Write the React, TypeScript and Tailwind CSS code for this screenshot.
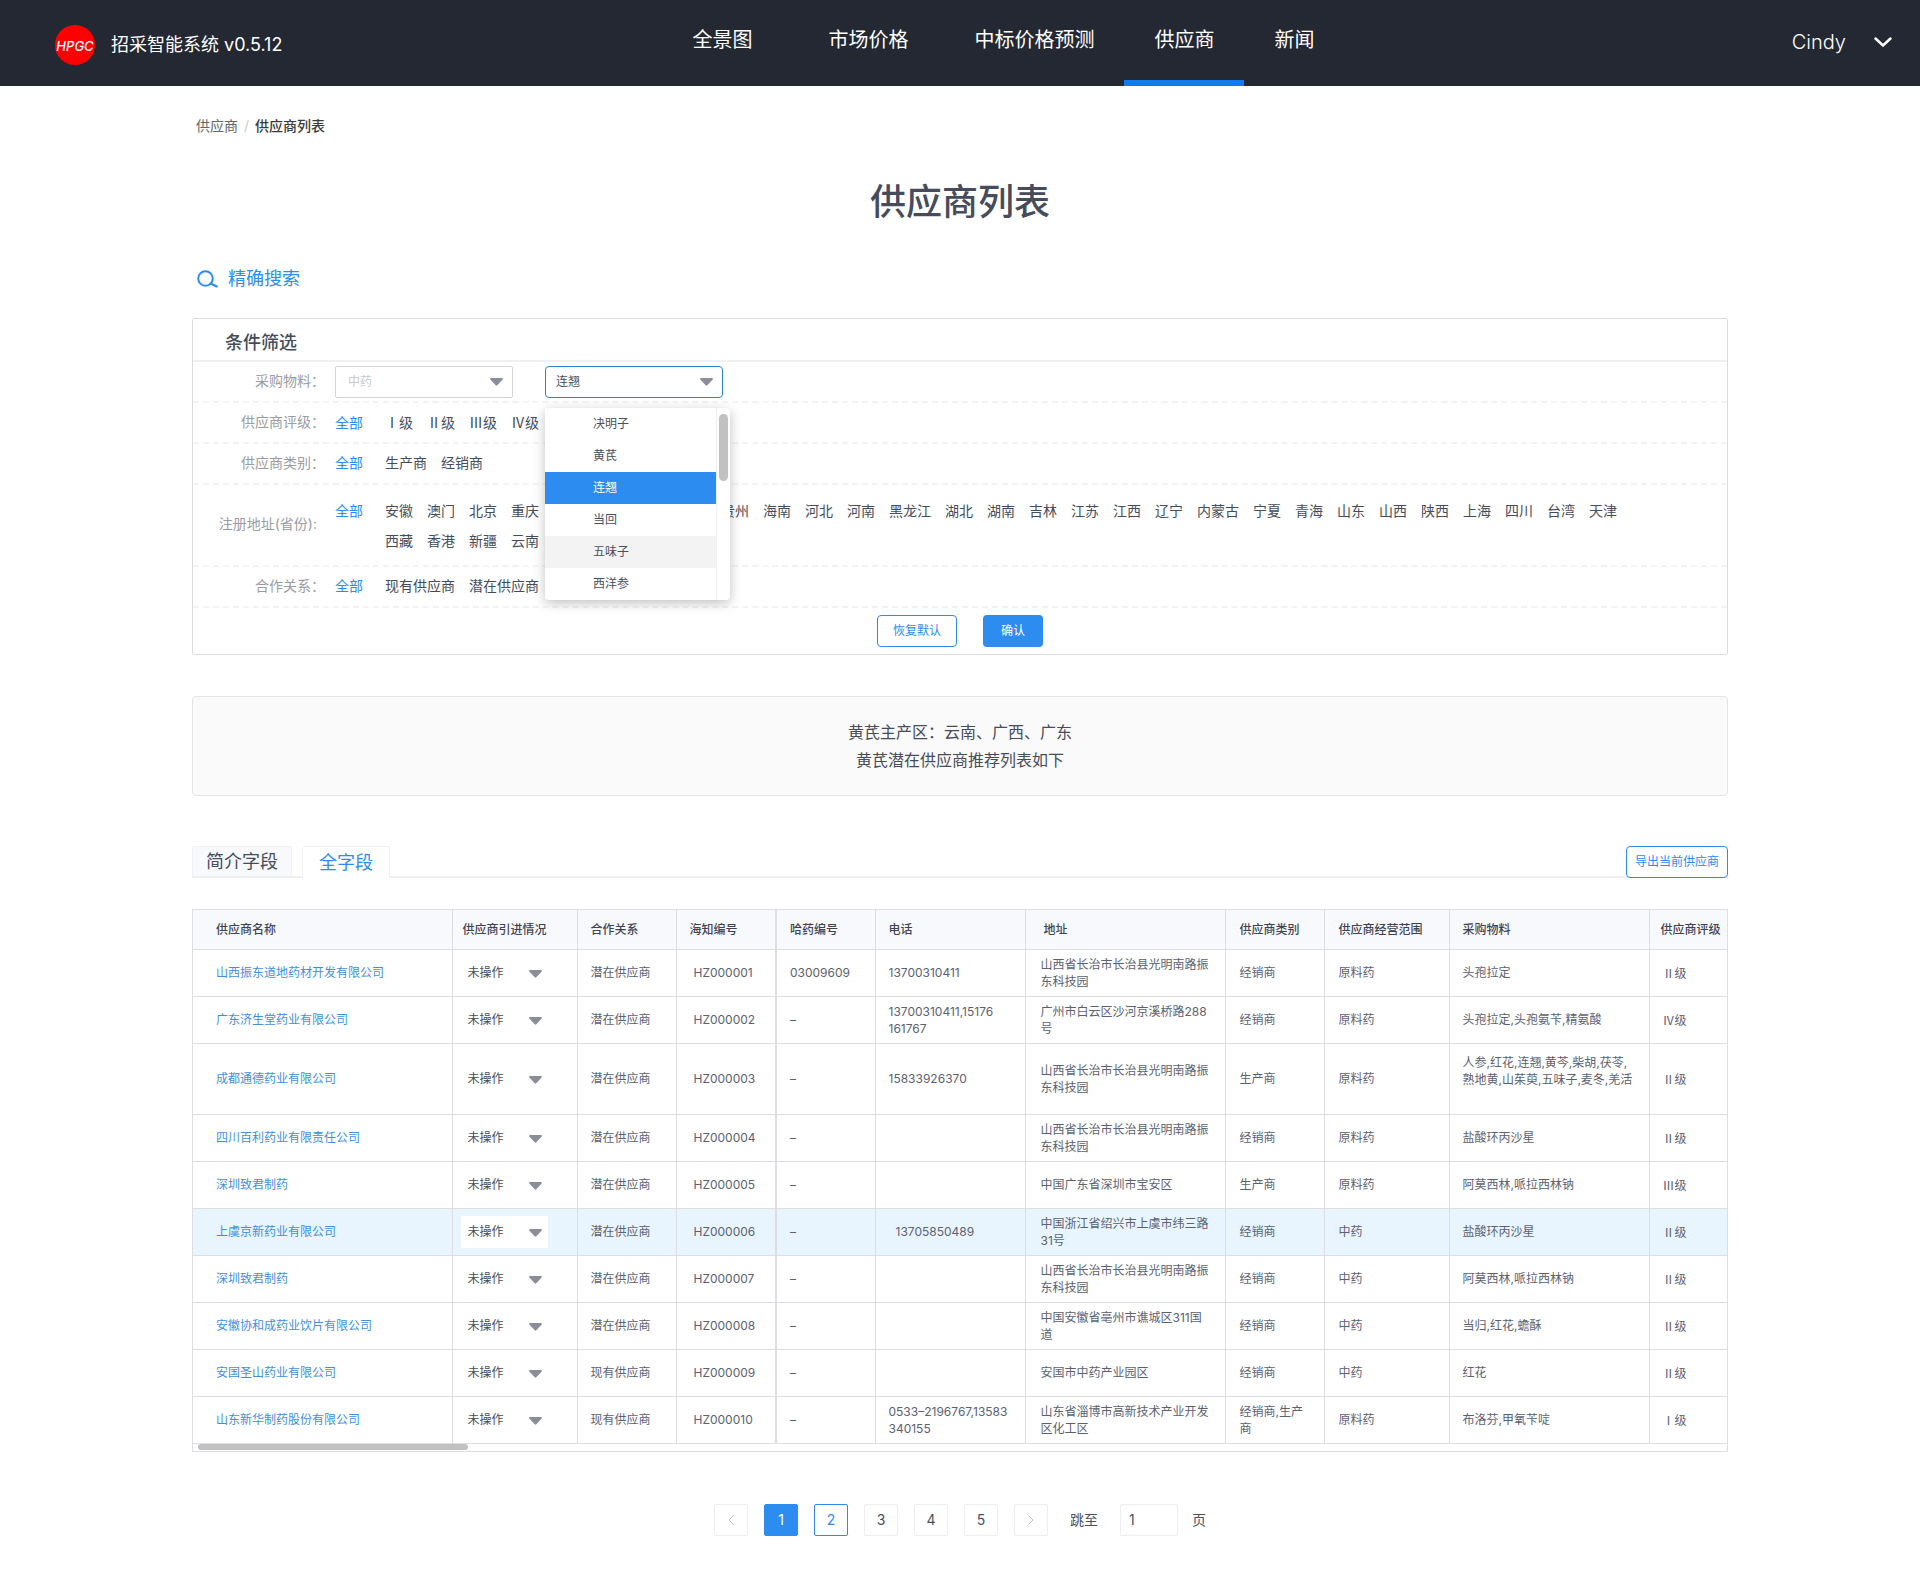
import { useState } from 'react';

const NAV_ITEMS = [
  { label: '全景图', className: 'mr-4' },
  { label: '市场价格', className: 'mr-1.5' },
  { label: '中标价格预测', className: '' },
  { label: '供应商', className: '' },
  { label: '新闻', className: '' },
];

const LEVELS = ['Ⅰ级', 'Ⅱ级', 'Ⅲ级', 'Ⅳ级'];
const TYPES = ['生产商', '经销商'];
const PROVINCES = [
  '安徽', '澳门', '北京', '重庆', '福建', '甘肃', '广东', '广西', '贵州', '海南', '河北', '河南', '黑龙江', '湖北', '湖南', '吉林', '江苏',
  '江西', '辽宁', '内蒙古', '宁夏', '青海', '山东', '山西', '陕西', '上海', '四川', '台湾', '天津', '西藏', '香港', '新疆', '云南', '浙江',
];
const RELATIONS = ['现有供应商', '潜在供应商'];
const MATERIALS = ['决明子', '黄芪', '连翘', '当回', '五味子', '西洋参'];

const COLUMNS = [
  { title: '供应商名称', width: 'w-[259px]', pad: 'pl-[23px]' },
  { title: '供应商引进情况', width: 'w-[125px]', pad: 'pl-2.5' },
  { title: '合作关系', width: 'w-[99px]', pad: 'pl-[13px]' },
  { title: '海知编号', width: 'w-[100px]', pad: 'pl-[13px]' },
  { title: '哈药编号', width: 'w-[99px]', pad: 'pl-[13px]' },
  { title: '电话', width: 'w-[150px]', pad: 'pl-[13px]' },
  { title: '地址', width: 'w-[200px]', pad: 'pl-[18px]' },
  { title: '供应商类别', width: 'w-[99px]', pad: 'pl-3.5' },
  { title: '供应商经营范围', width: 'w-[125px]', pad: 'pl-3.5' },
  { title: '采购物料', width: 'w-[200px]', pad: 'pl-[13px]' },
  { title: '供应商评级', width: 'w-[80px]', pad: 'pl-[11px]' },
];

const SHANXI = '山西省长治市长治县光明南路振东科技园';

const SUPPLIERS = [
  { name: '山西振东道地药材开发有限公司', relation: '潜在供应商', code: 'HZ000001', hy: '03009609', phone: '13700310411', address: SHANXI, type: '经销商', scope: '原料药', material: '头孢拉定', level: 'Ⅱ级' },
  { name: '广东济生堂药业有限公司', relation: '潜在供应商', code: 'HZ000002', hy: '–', phone: '13700310411,15176\n161767', address: '广州市白云区沙河京溪桥路288\n号', type: '经销商', scope: '原料药', material: '头孢拉定,头孢氨苄,精氨酸', level: 'Ⅳ级' },
  { name: '成都通德药业有限公司', relation: '潜在供应商', code: 'HZ000003', hy: '–', phone: '15833926370', address: SHANXI, type: '生产商', scope: '原料药', material: '人参,红花,连翘,黄芩,柴胡,茯苓,\n熟地黄,山茱萸,五味子,麦冬,羌活', level: 'Ⅱ级' },
  { name: '四川百利药业有限责任公司', relation: '潜在供应商', code: 'HZ000004', hy: '–', phone: '', address: SHANXI, type: '经销商', scope: '原料药', material: '盐酸环丙沙星', level: 'Ⅱ级' },
  { name: '深圳致君制药', relation: '潜在供应商', code: 'HZ000005', hy: '–', phone: '', address: '中国广东省深圳市宝安区', type: '生产商', scope: '原料药', material: '阿莫西林,哌拉西林钠', level: 'Ⅲ级' },
  { name: '上虞京新药业有限公司', relation: '潜在供应商', code: 'HZ000006', hy: '–', phone: '13705850489', address: '中国浙江省绍兴市上虞市纬三路\n31号', type: '经销商', scope: '中药', material: '盐酸环丙沙星', level: 'Ⅱ级' },
  { name: '深圳致君制药', relation: '潜在供应商', code: 'HZ000007', hy: '–', phone: '', address: SHANXI, type: '经销商', scope: '中药', material: '阿莫西林,哌拉西林钠', level: 'Ⅱ级' },
  { name: '安徽协和成药业饮片有限公司', relation: '潜在供应商', code: 'HZ000008', hy: '–', phone: '', address: '中国安徽省亳州市谯城区311国\n道', type: '经销商', scope: '中药', material: '当归,红花,蟾酥', level: 'Ⅱ级' },
  { name: '安国圣山药业有限公司', relation: '现有供应商', code: 'HZ000009', hy: '–', phone: '', address: '安国市中药产业园区', type: '经销商', scope: '中药', material: '红花', level: 'Ⅱ级' },
  { name: '山东新华制药股份有限公司', relation: '现有供应商', code: 'HZ000010', hy: '–', phone: '0533–2196767,13583\n340155', address: '山东省淄博市高新技术产业开发区化工区', type: '经销商,生产\n商', scope: '原料药', material: '布洛芬,甲氧苄啶', level: 'Ⅰ级' },
];

function Caret({ className = '' }: { className?: string }) {
  return (
    <svg viewBox="0 0 13 8" className={`pointer-events-none absolute h-2 w-[13px] fill-[#8b8e98] ${className}`} aria-hidden="true">
      <path d="M1 0h11c.8 0 1.200.8.7 1.400L7.300 7.300c-.4.5-1.200.5-1.600 0L.3 1.400C-.2.8.2 0 1 0z" />
    </svg>
  );
}

function Logo() {
  return (
    <svg viewBox="0 0 40 40" className="size-10" aria-hidden="true">
      <circle cx="20" cy="20" r="20" fill="#fe0000" />
      <text x="20" y="26" textAnchor="middle" fill="#fff" fontFamily="Inter, sans-serif" fontSize="13" fontStyle="italic" fontWeight="500">HPGC</text>
    </svg>
  );
}

function FilterRow({ label, labelClass = '', children }: { label: string; labelClass?: string; children: any }) {
  return (
    <div className="flex items-center border-b-2 border-dashed border-[#f3f3f3]">
      <div className={`w-[132px] shrink-0 pb-0.5 text-right text-sm text-[#9a9ca3] ${labelClass}`}>{label}</div>
      <div className="ml-2.5 flex-1">{children}</div>
    </div>
  );
}

function FilterOptions({ options, className = 'h-[39px] items-center pb-0.5' }: { options: string[]; className?: string }) {
  const [active, setActive] = useState('全部');
  return (
    <div className={`flex text-sm text-[#464c5b] ${className}`}>
      <button onClick={() => setActive('全部')} className={`mr-[22px] shrink-0 ${active === '全部' ? 'text-[#2d8cf0]' : ''}`}>全部</button>
      <div className="flex flex-wrap gap-x-3.5 gap-y-2.5">
        {options.map((o) => (
          <button key={o} onClick={() => setActive(o)} className={active === o ? 'text-[#2d8cf0]' : ''}>{o}</button>
        ))}
      </div>
    </div>
  );
}

function MaterialDropdown() {
  const [value, setValue] = useState('连翘');
  return (
    <div className="absolute top-[42px] left-0 z-10 flex w-[185px] overflow-hidden rounded bg-white shadow-[0_3px_12px_rgba(0,0,0,0.25)]">
      <div className="flex-1" role="listbox" aria-label="物料">
        {MATERIALS.map((m) => (
          <button
            key={m}
            role="option"
            aria-selected={m === value}
            onClick={() => setValue(m)}
            className={`block h-8 w-full pl-12 text-left text-xs ${m === value ? 'bg-[#2d8cf0] text-white' : m === '五味子' ? 'bg-[#f3f3f3] text-[#495060]' : 'text-[#495060]'}`}
          >
            {m}
          </button>
        ))}
      </div>
      <div className="w-3.5 border-l border-[#eee] px-0.5 pt-1.5">
        <div className="h-[67px] rounded-full bg-[#c1c1c1]" />
      </div>
    </div>
  );
}

function FilterPanel() {
  return (
    <section className="mt-[25px] rounded-xs border border-[#dcdddf]">
      <h2 className="border-b-2 border-[#f0f0f0] pt-[11px] pb-1 pl-8 text-lg leading-[26px] font-medium text-[#464c5b]">条件筛选</h2>
      <FilterRow label="采购物料：">
        <div className="flex h-[39px] items-center gap-8">
          <div className="relative">
            <select aria-label="物料类别" className="h-8 w-[178px] appearance-none rounded-xs border border-[#d5d6d9] bg-white pl-3 text-xs text-[#c8cacf]">
              <option>中药</option>
            </select>
            <Caret className="top-3 right-2.5" />
          </div>
          <div className="relative">
            <select aria-label="物料名称" className="h-8 w-[178px] appearance-none rounded border border-[#2b85c4] bg-white pl-2.5 text-xs text-[#495060]">
              <option>连翘</option>
            </select>
            <Caret className="top-3 right-2.5" />
            <MaterialDropdown />
          </div>
        </div>
      </FilterRow>
      <FilterRow label="供应商评级：">
        <FilterOptions options={LEVELS} className="h-[39px] items-center pb-0.5 font-['Noto_Sans_CJK_SC',sans-serif]" />
      </FilterRow>
      <FilterRow label="供应商类别："><FilterOptions options={TYPES} /></FilterRow>
      <FilterRow label="注册地址(省份):" labelClass="pr-2">
        <FilterOptions options={PROVINCES} className="items-start pt-4 pb-3.5 pr-20" />
      </FilterRow>
      <FilterRow label="合作关系："><FilterOptions options={RELATIONS} /></FilterRow>
      <div className="flex justify-center gap-[26px] py-[7px] text-xs">
        <button className="h-8 w-20 rounded border border-[#2d8cf0] text-[#2d8cf0]">恢复默认</button>
        <button className="h-8 w-[60px] rounded bg-[#2d8cf0] text-white">确认</button>
      </div>
    </section>
  );
}

function SupplierTable() {
  return (
    <div className="mt-[31px] overflow-hidden border border-[#dcdee2]">
      <table className="w-full table-fixed border-collapse text-left text-xs leading-[17px] text-[#5c6172]">
        <thead>
          <tr className="h-[39px] border-b border-[#dcdee2] bg-[#f8f9fd] text-[#3f4453]">
            {COLUMNS.map((c, i) => (
              <th key={c.title} scope="col" className={`font-medium whitespace-nowrap ${c.width} ${c.pad} ${i === 4 ? 'border-l-2' : i > 0 ? 'border-l' : ''} border-[#dcdee2]`}>{c.title}</th>
            ))}
          </tr>
        </thead>
        <tbody className="whitespace-pre-line">
          {SUPPLIERS.map((s) => {
            const hovered = s.code === 'HZ000006';
            return (
              <tr key={s.code} className={`border-b border-[#dcdee2] ${s.code === 'HZ000003' ? 'h-[71px]' : 'h-[47px]'} ${hovered ? 'bg-[#e8f5fe]' : ''}`}>
                <td className="pl-[23px]"><a href="#" className="text-[#3f8fdf]">{s.name}</a></td>
                <td className="border-l border-[#dcdee2] pl-2">
                  <div className="relative w-[87px]">
                    <select aria-label={`${s.name}引进情况`} className="h-8 w-full appearance-none rounded-xs bg-white pl-[7px] text-xs text-[#464c5b]">
                      <option>未操作</option>
                    </select>
                    <Caret className="top-[13px] right-1.5" />
                  </div>
                </td>
                <td className="border-l border-[#dcdee2] pl-[13px]">{s.relation}</td>
                <td className="border-l border-[#dcdee2] pl-[17px]">{s.code}</td>
                <td className="border-l-2 border-[#dcdee2] pl-[13px]">{s.hy}</td>
                <td className={`border-l border-[#dcdee2] ${hovered ? 'pl-5' : 'pl-[13px]'}`}>{s.phone}</td>
                <td className="border-l border-[#dcdee2] pr-4 pl-[15px]">{s.address}</td>
                <td className="border-l border-[#dcdee2] pl-3.5">{s.type}</td>
                <td className="border-l border-[#dcdee2] pl-3.5">{s.scope}</td>
                <td className={`border-l border-[#dcdee2] pl-[13px] ${s.code === 'HZ000003' ? 'pb-4' : ''}`}>{s.material}</td>
                <td className="border-l border-[#dcdee2] pl-[13px] font-['Noto_Sans_CJK_SC',sans-serif]">{s.level}</td>
              </tr>
            );
          })}
        </tbody>
      </table>
      <div className="pb-px pl-[5px]">
        <div className="h-1.5 w-[270px] rounded-full bg-[#c1c1c1]" />
      </div>
    </div>
  );
}

function Pagination() {
  const [page, setPage] = useState(1);
  return (
    <nav aria-label="分页" className="mt-[52px] flex items-center justify-center text-sm text-[#495060]">
      <div className="flex gap-4">
        <button aria-label="上一页" className="flex h-8 w-[34px] items-center justify-center rounded-xs border border-[#eee]">
          <svg viewBox="0 0 6 10" className="h-2.5 w-1.5 fill-none stroke-[#bbbec4]" aria-hidden="true"><path d="M5.500.5 1 5l4.500 4.500" /></svg>
        </button>
        {[1, 2, 3, 4, 5].map((n) => (
          <button
            key={n}
            onClick={() => setPage(n)}
            className={`h-8 w-[34px] rounded-xs border ${n === page ? 'border-[#2d8cf0] bg-[#2d8cf0] text-white' : n === 2 ? 'border-[#2d8cf0] text-[#2d8cf0]' : 'border-[#eee]'}`}
          >
            {n}
          </button>
        ))}
        <button aria-label="下一页" className="flex h-8 w-[34px] items-center justify-center rounded-xs border border-[#eee]">
          <svg viewBox="0 0 6 10" className="h-2.5 w-1.5 fill-none stroke-[#bbbec4]" aria-hidden="true"><path d="M.5.5 5 5 .5 9.500" /></svg>
        </button>
      </div>
      <label htmlFor="jump" className="mr-[22px] ml-[22px]">跳至</label>
      <input id="jump" defaultValue="1" className="mr-3.5 h-8 w-[58px] rounded-xs border border-[#eee] pl-2" />
      <span>页</span>
    </nav>
  );
}

export default function App() {
  const [activeNav, setActiveNav] = useState('供应商');

  return (
    <div className="min-h-screen bg-white pb-[43px] font-['Inter','Noto_Sans_CJK_SC',sans-serif]">
      <header className="flex h-[86px] bg-[#242832] text-white">
        <div className="flex basis-[34.500%] items-center gap-4 pt-1 pl-[55px] text-lg">
          <Logo />
          <span>招采智能系统 v0.5.12</span>
        </div>
        <nav className="flex text-xl">
          {NAV_ITEMS.map((item) => (
            <a
              key={item.label}
              href="#"
              onClick={() => setActiveNav(item.label)}
              className={`flex items-center border-b-[6px] px-[30px] whitespace-nowrap ${item.className} ${activeNav === item.label ? 'border-[#0f7bf0]' : 'border-transparent'}`}
            >
              {item.label}
            </a>
          ))}
        </nav>
        <button className="ml-auto flex items-center gap-7 pr-7 pb-0.5 text-xl font-light">
          Cindy
          <svg viewBox="0 0 18 10" className="h-2.5 w-[18px] fill-none stroke-white stroke-[2.5]" aria-hidden="true"><path d="m1.500 1.500 7.500 7 7.500-7" strokeLinecap="round" /></svg>
        </button>
      </header>

      <main className="mx-auto w-4/5">
        <div className="flex gap-1.5 pt-[30px] pl-1 text-sm text-[#666]">
          <a href="#">供应商</a>
          <span className="text-[#ccc]">/</span>
          <span className="font-medium text-[#3c3c3c]">供应商列表</span>
        </div>
        <h1 className="mt-10 text-center text-4xl leading-[52px] font-medium text-[#464c5b]">供应商列表</h1>
        <button className="mt-[37px] ml-[5px] flex items-center gap-2.5 text-lg text-[#2d8cf0]">
          <svg viewBox="0 0 21 18" className="h-[18px] w-[21px] fill-none stroke-[#2d8cf0] stroke-2" aria-hidden="true">
            <circle cx="8.500" cy="8.500" r="7.300" />
            <path d="m13.500 13.500 6.300 3" strokeLinecap="round" />
          </svg>
          精确搜索
        </button>

        <FilterPanel />

        <div className="mt-[41px] rounded border border-[#e3e5e8] bg-[#fafafa] py-[21px] text-center text-base leading-7 text-[#464c5b]">
          <p>黄芪主产区：云南、广西、广东</p>
          <p>黄芪潜在供应商推荐列表如下</p>
        </div>

        <div className="mt-[50px] flex border-b-2 border-[#f0f0f0] text-lg">
          <button className="h-[30px] w-[100px] rounded-t-xs border border-b-0 border-[#f0f0f0] bg-[#f8f9fd] text-[#464c5b]">简介字段</button>
          <button className="-mb-0.5 ml-2.5 h-8 w-[88px] rounded-t-xs border border-b-0 border-[#f0f0f0] bg-white text-[#2d8cf0]">全字段</button>
          <button className="-mb-0.5 ml-auto h-8 w-[102px] rounded border border-[#2d8cf0] bg-white text-xs text-[#2d8cf0]">导出当前供应商</button>
        </div>

        <SupplierTable />
        <Pagination />
      </main>
    </div>
  );
}
